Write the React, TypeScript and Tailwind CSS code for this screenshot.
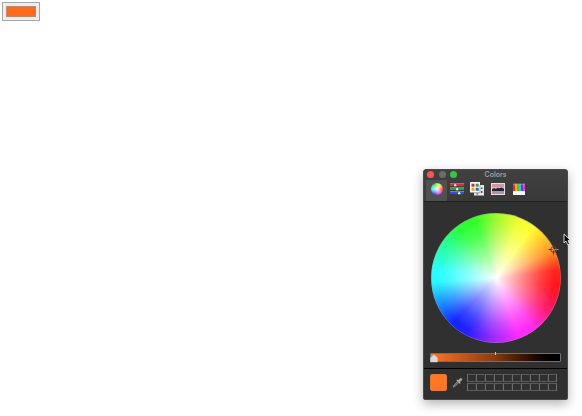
function WheelIcon() {
  return <div className="size-3 rounded-full bg-[radial-gradient(circle,#ffffff_0%,#ffffff00_65%),conic-gradient(#9dec48,#fff044_30deg,#f74a4d_90deg,#ed4bec_150deg,#4b50ef_210deg,#45eef0_270deg,#35e547_330deg,#9dec48)]" />;
}

function SlidersIcon() {
  return (
    <svg width="14" height="12" viewBox="0 0 14 12">
      <path d="M0 1h14v2H0z" fill="#e0283c" />
      <path d="M0 5h14v2H0z" fill="#2f9e3f" />
      <path d="M0 9h14v2H0z" fill="#2f50d8" />
      <path d="M0 0h14v1H0zM0 4h14v1H0zM0 8h14v1H0z" fill="#8a7c80" />
      <path d="M4 3.3V2l1.2-1.2L6.4 2v1.3zM6 7.3V6l1.2-1.2L8.4 6v1.3zM8 11.3V10l1.2-1.2 1.2 1.2v1.3z" fill="#fff" />
    </svg>
  );
}

function PaletteIcon() {
  return (
    <svg width="14" height="14" viewBox="0 0 14 14">
      <path d="M4 3h10v10.5H4z" fill="#e8e8e8" />
      <path d="M11 5.5h1.5V7H11zM11 9h1.5v2H11zM6.5 11.3H8v1.2H6.5z" fill="#555556" />
      <path d="M0 0h10v10.5H0z" fill="#fafafa" />
      <path d="M10 3v7.7H4" fill="none" stroke="#777778" strokeWidth=".6" />
      <path d="M1.5 1.7h3v3h-3z" fill="#c92c35" />
      <path d="M5.7 1.7h3v3h-3z" fill="#3f9a48" />
      <path d="M1.5 5.8h3v3h-3z" fill="#dbad24" />
      <path d="M5.7 5.8h3v3h-3z" fill="#3a60c8" />
    </svg>
  );
}

function PhotoIcon() {
  return (
    <svg width="14" height="12" viewBox="0 0 14 12">
      <path d="M0 0h14v12H0z" fill="#e3dfe3" />
      <path d="M1 1h12v3H1z" fill="#cf98a8" />
      <path d="M1 4h12v2.5H1z" fill="#f2b39f" />
      <path d="M1 6l2-.7 2 .5 2-1 1.5.5 2-.8L13 5.7V8H1z" fill="#252334" />
      <path d="M1 8h12v3H1z" fill="#b090aa" />
    </svg>
  );
}

function PencilsIcon() {
  return (
    <svg width="12" height="12" viewBox="0 0 12 12">
      <path d="M0 2l1-2 1 2v6H0z" fill="#f02a2c" />
      <path d="M2 2l1-2 1 2v6H2z" fill="#f7b51e" />
      <path d="M4 2l1-2 1 2v6H4z" fill="#2fd03a" />
      <path d="M6 2l1-2 1 2v6H6z" fill="#2fc3e8" />
      <path d="M8 2l1-2 1 2v6H8z" fill="#6038f2" />
      <path d="M10 2l1-2 1 2v6h-2z" fill="#e83cc0" />
      <path d="M0 2l1-2 1 2zm2 0l1-2 1 2zm2 0l1-2 1 2zm2 0l1-2 1 2zm2 0l1-2 1 2zm2 0l1-2 1 2z" fill="#eed4a5" fillOpacity=".5" />
      <path d="M0 8h12v4H0z" fill="#f8f8f8" />
    </svg>
  );
}

function Eyedropper() {
  return (
    <svg width="11" height="11" viewBox="0 0 11 11">
      <path d="M6 4L1.8 8.2l-.8 2 2-.8L7.2 5.2" fill="#68686a" stroke="#8c8c8e" strokeWidth=".8" />
      <path d="M5.3 3.3l2.6 2.6" stroke="#aaaaac" strokeWidth="1.4" strokeLinecap="round" />
      <path d="M7.4 3.8l1.5-1.5" stroke="#a8a8aa" strokeWidth="2.6" strokeLinecap="round" />
    </svg>
  );
}

function ColorPanel() {
  return (
    <section className="absolute left-[423px] top-[169px] flex h-[231px] w-[145px] flex-col rounded-[3px] rounded-b-[2px] border border-[#4b4b4c] bg-[#303031] shadow-[0_4px_11px_rgba(0,0,0,0.3)]">
      <header className="h-[31px] rounded-t-[2px] bg-linear-to-b from-[#414142] to-[#39393a] shadow-[0_1px_0_#202021]">
        <div className="relative flex h-[10px] items-start gap-[4.5px] pl-[3px] pt-[0.8px]">
          <span className="size-[7px] rounded-full bg-[#fb5652]" />
          <span className="size-[7px] rounded-full bg-[#6b6b6c]" />
          <span className="size-[7px] rounded-full bg-[#32c748]" />
          <h1 className="absolute inset-x-0 top-0 text-center font-['Inter','Liberation_Sans',sans-serif] text-[7px] leading-[10px] font-medium text-[#aaaaab]">Colors</h1>
        </div>
        <nav className="flex h-[21px] items-start pl-[2px]">
          <button className="flex h-[21px] w-[21px] justify-center bg-[#505051] pt-[3px]"><WheelIcon /></button>
          <button className="flex w-5 justify-center pt-[3px]"><SlidersIcon /></button>
          <button className="flex w-5 justify-center pt-[2px]"><PaletteIcon /></button>
          <button className="flex w-[22px] justify-center pt-[3px]"><PhotoIcon /></button>
          <button className="flex w-5 justify-center pt-[3px]"><PencilsIcon /></button>
        </nav>
      </header>
      <div className="flex h-[167px] flex-col px-[6px] pt-3">
        <div className="relative ml-[0.5px] size-[130px] rounded-full shadow-[inset_0_0_0_0.75px_rgba(150,150,150,0.55)] bg-[radial-gradient(circle_closest-side,#ffffff_0%,#ffffffc8_16%,#ffffff78_42%,#ffffff28_70%,#ffffff00_90%),conic-gradient(#a0f730_0deg,#f0ff30_22deg,#ffff30_36deg,#ff9424_64deg,#ff241c_83deg,#ff141c_98deg,#ff1c70_122deg,#ff2cf0_143deg,#ff2cff_158deg,#9328ff_185deg,#2420ff_208deg,#1424ff_224deg,#1c98ff_247deg,#28f8ff_266deg,#28ffff_277deg,#28ff9d_302deg,#28ff38_324deg,#30ff28_340deg,#a0f730_360deg)]">
          <svg className="absolute left-[117px] top-[31px]" width="11" height="11" viewBox="0 0 11 11" fill="none" strokeWidth="1">
            <circle cx="5.5" cy="5.5" r="2.8" stroke="#704030" />
            <path d="M.5 5.5h4M5.5 .5v4M5.5 6.5v4" stroke="#7c2818" />
            <path d="M6.5 5.5h4" stroke="#929292" />
          </svg>
        </div>
        <div className="relative mt-[10px] h-[9px] w-[131px] rounded-[1px] border border-[#717172] bg-linear-to-r from-[#ff7425] via-[#8c3e12] via-48% to-black">
          <span className="absolute left-[64px] -top-[2px] h-[3px] w-px bg-[#c5c5c5]" />
          <svg className="absolute -left-px top-0" width="8" height="9" viewBox="0 0 8 9">
            <path d="M.5 4L4 .5 7.5 4v4H.5z" fill="#dadada" stroke="#c9c9c9" strokeWidth=".5" />
          </svg>
        </div>
      </div>
      <footer className="flex flex-1 items-start border-t border-black px-[6px] pt-[5px]">
        <div className="size-[17px] rounded-[2px] border border-[#e5772f] bg-[#ff7624]" />
        <div className="ml-[5px] mt-[3px]"><Eyedropper /></div>
        <div className="ml-1 grid grid-cols-10 gap-y-px">
          {Array.from({ length: 20 }, (_, index) => (
            <span key={index} className="h-2 w-[9px] border border-l-[#6c6c6d] border-y-[#5c5c5d] border-r-[#3a3a3b] last:border-r-[#6c6c6d] nth-[10]:border-r-[#6c6c6d]" />
          ))}
        </div>
      </footer>
    </section>
  );
}

export default function App() {
  return (
    <main className="relative h-[416px] w-[582px] overflow-hidden bg-white pl-[2px] pt-[2px]">
      <div className="h-[19px] w-[38px] border border-[#a5a5a5] bg-[#ededed] p-[3px]">
        <div className="h-[11px] w-[30px] border border-[#c08a6c] bg-[#ff6a1d]" />
      </div>
      <ColorPanel />
      <svg className="absolute left-[563px] top-[233px]" width="8" height="13" viewBox="0 0 8 13">
        <path d="M1 1v9l2-2 1.7 3.8 1.8-.8L5 7.4h2.5z" fill="#050505" stroke="#e6e6e6" strokeWidth=".9" />
      </svg>
    </main>
  );
}
